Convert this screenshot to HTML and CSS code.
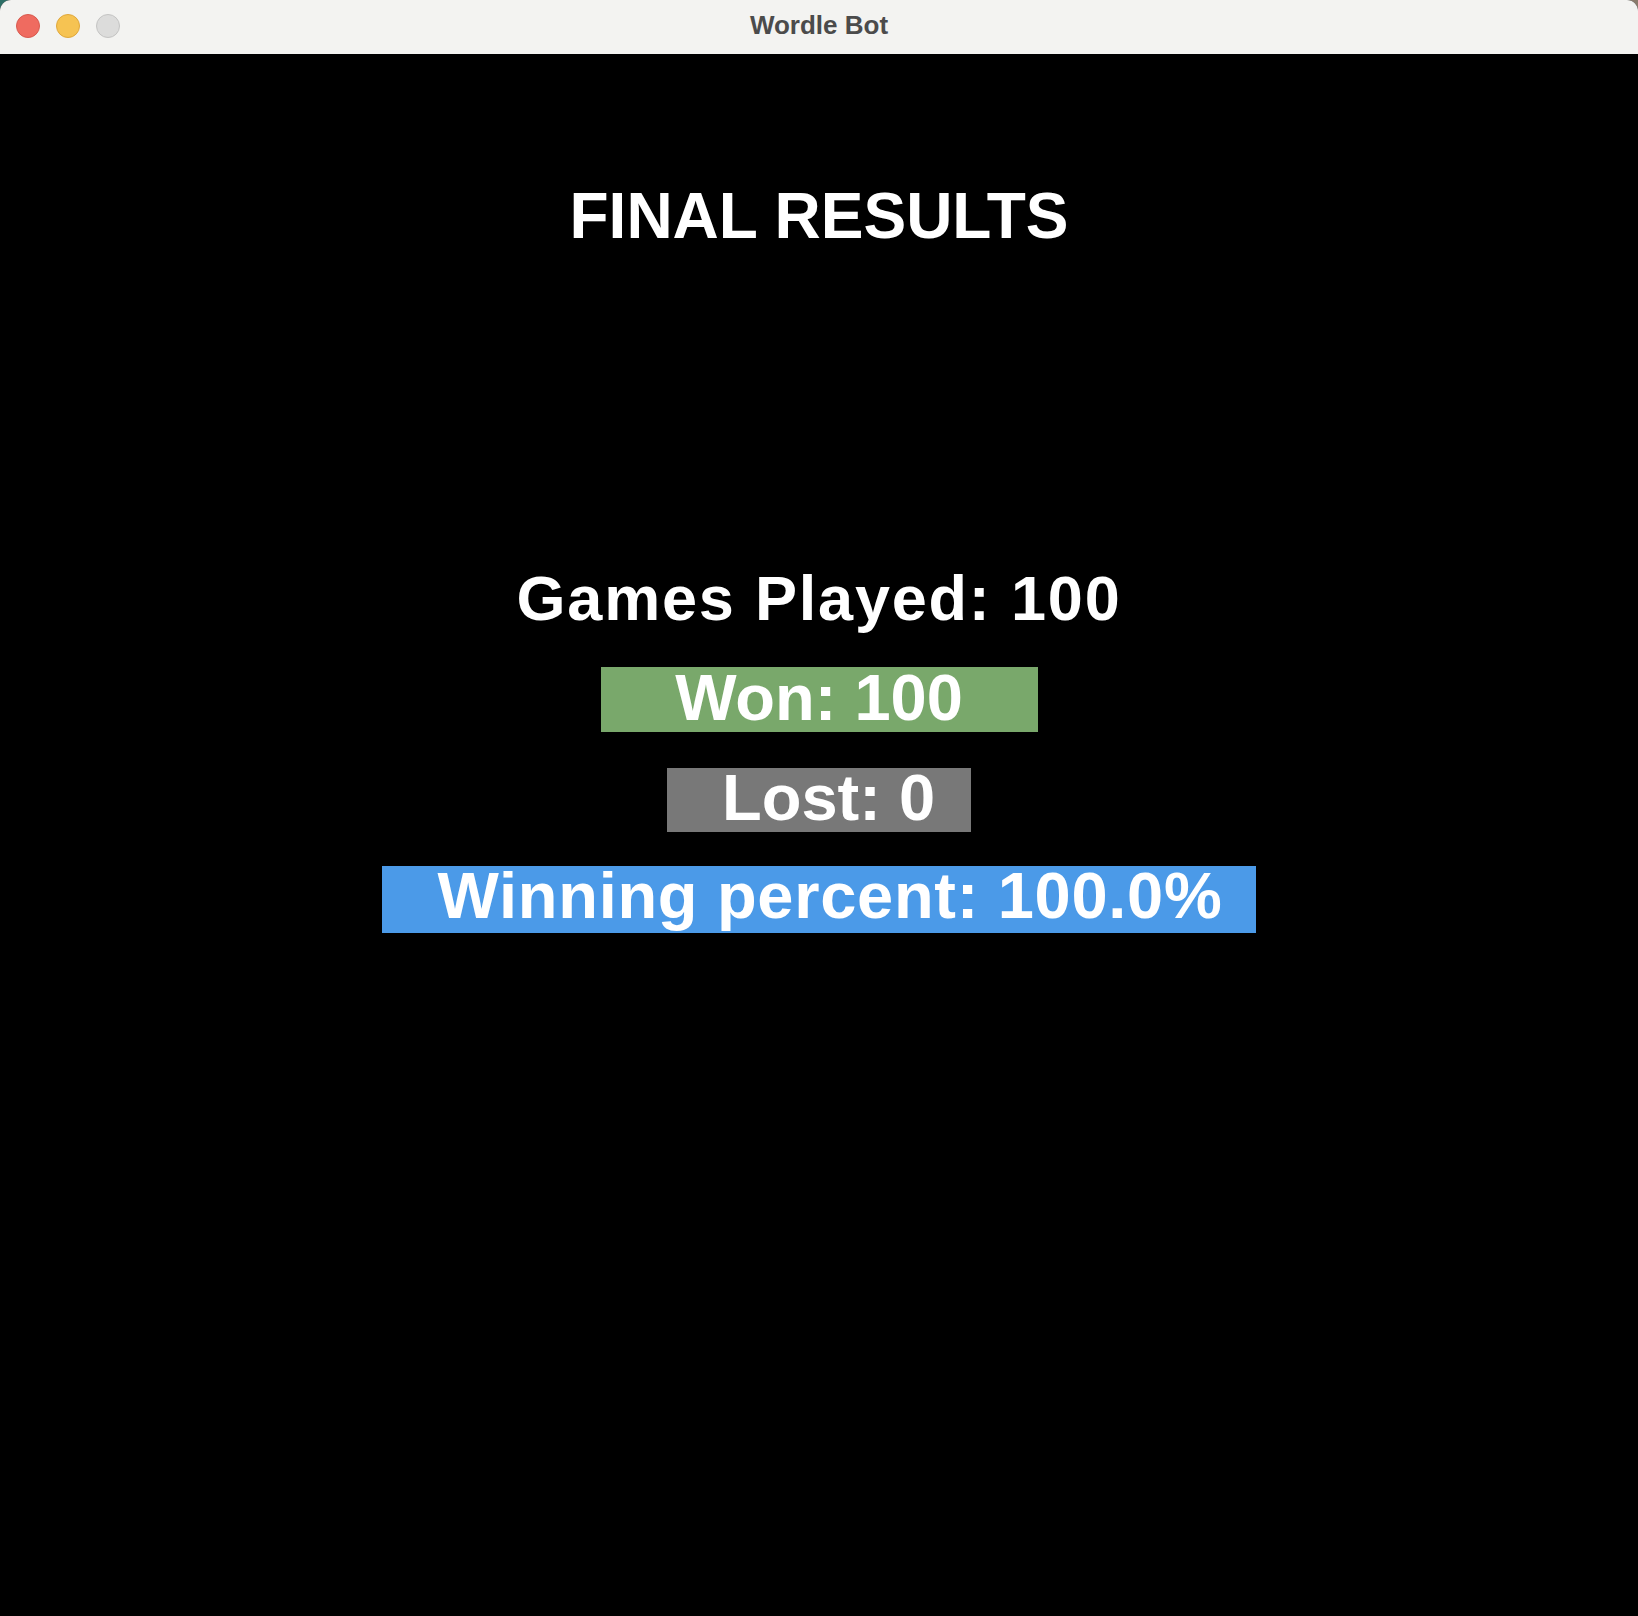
FILE: index.html
```html
<!DOCTYPE html>
<html lang="en">
<head>
<meta charset="utf-8">
<title>Wordle Bot</title>
<link rel="stylesheet" href="styles.css">
</head>
<body>
<div class="window">
  <header class="titlebar">
    <div class="lights">
      <span class="light red"></span>
      <span class="light yellow"></span>
      <span class="light gray"></span>
    </div>
    <div class="title">Wordle Bot</div>
  </header>
  <main class="content">
    <h1 class="heading">FINAL RESULTS</h1>
    <div class="played">Games Played: 100</div>
    <div class="stat won">Won: 100</div>
    <div class="stat lost">Lost: 0</div>
    <div class="stat pct">Winning percent: 100.0%</div>
  </main>
</div>
</body>
</html>
```
FILE: styles.css
```css
html, body {
  margin: 0;
  padding: 0;
}
body {
  width: 1638px;
  height: 1616px;
  background: linear-gradient(90deg, #2e6f67 0%, #2e6f67 50%, #8a7b6c 50%, #8a7b6c 100%);
  font-family: "Liberation Sans", Arial, sans-serif;
  overflow: hidden;
}
.window {
  width: 1638px;
  height: 1616px;
  display: flex;
  flex-direction: column;
  border-radius: 11px 11px 0 0;
  overflow: hidden;
  background: #000;
}
.titlebar {
  position: relative;
  height: 54px;
  flex: none;
  background: #f3f3f1;
  display: flex;
  align-items: flex-start;
  justify-content: center;
}
.lights {
  position: absolute;
  left: 16px;
  top: 14px;
  display: flex;
  gap: 16px;
}
.light {
  width: 24px;
  height: 24px;
  border-radius: 50%;
  box-sizing: border-box;
  display: block;
}
.red { background: #ef6b60; border: 1px solid #d85a4f; }
.yellow { background: #f6c352; border: 1px solid #e0a83c; }
.gray { background: #dcdcdb; border: 1px solid #c4c4c3; }
.title {
  font-size: 26px;
  font-weight: 700;
  line-height: 50px;
  color: #4b4b4b;
}
.content {
  flex: 1;
  background: #000;
  display: flex;
  flex-direction: column;
  align-items: center;
  color: #fff;
}
.heading {
  margin: 130px 0 0 0;
  font-size: 64px;
  line-height: 64px;
  font-weight: 700;
}
.played {
  margin-top: 319px;
  font-size: 63px;
  line-height: 63px;
  font-weight: 700;
  letter-spacing: 1.8px;
}
.stat {
  box-sizing: border-box;
  font-size: 65px;
  font-weight: 700;
  text-align: center;
  white-space: nowrap;
}
.won {
  margin-top: 37px;
  width: 437px;
  height: 65px;
  line-height: 61px;
  background: #79a86b;
}
.lost {
  margin-top: 36px;
  width: 304px;
  height: 64px;
  line-height: 59px;
  padding-left: 19px;
  background: #787878;
}
.pct {
  margin-top: 34px;
  width: 874px;
  height: 67px;
  line-height: 59px;
  padding-left: 22px;
  letter-spacing: 0.7px;
  background: #4b9ae8;
}
```
